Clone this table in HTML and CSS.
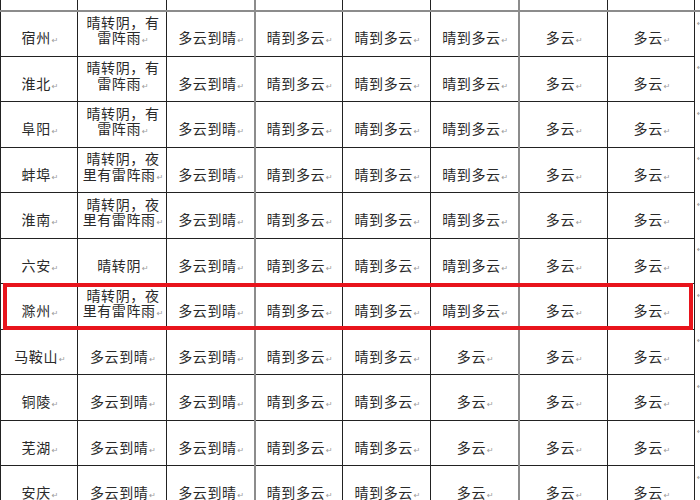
FILE: index.html
```html
<!DOCTYPE html>
<html lang="zh-CN">
<head>
<meta charset="utf-8">
<title>安徽各地天气预报</title>
<link rel="stylesheet" href="styles.css">
</head>
<body>
<div class="sheet">
  <table class="forecast">
    <colgroup>
      <col class="c-city"><col class="c-w1"><col class="c-w2"><col class="c-w3"><col class="c-w4"><col class="c-w5"><col class="c-w6"><col class="c-w7"><col class="c-end">
    </colgroup>
    <tbody>
      <tr class="r-first"><td>亳州<span class="pm">↵</span></td><td>晴转阴，有雷阵雨<span class="pm">↵</span></td><td>多云到晴<span class="pm">↵</span></td><td class="gl">晴到多云<span class="pm">↵</span></td><td>晴到多云<span class="pm">↵</span></td><td>晴到多云<span class="pm">↵</span></td><td class="gl">多云<span class="pm">↵</span></td><td>多云<span class="pm">↵</span></td><td class="end">↵</td></tr>
      <tr class="r-top"><td>宿州<span class="pm">↵</span></td><td>晴转阴，有雷阵雨<span class="pm">↵</span></td><td>多云到晴<span class="pm">↵</span></td><td class="gl">晴到多云<span class="pm">↵</span></td><td>晴到多云<span class="pm">↵</span></td><td>晴到多云<span class="pm">↵</span></td><td class="gl">多云<span class="pm">↵</span></td><td>多云<span class="pm">↵</span></td><td class="end">↵</td></tr>
      <tr><td>淮北<span class="pm">↵</span></td><td>晴转阴，有雷阵雨<span class="pm">↵</span></td><td>多云到晴<span class="pm">↵</span></td><td class="gl">晴到多云<span class="pm">↵</span></td><td>晴到多云<span class="pm">↵</span></td><td>晴到多云<span class="pm">↵</span></td><td class="gl">多云<span class="pm">↵</span></td><td>多云<span class="pm">↵</span></td><td class="end">↵</td></tr>
      <tr><td>阜阳<span class="pm">↵</span></td><td>晴转阴，有雷阵雨<span class="pm">↵</span></td><td>多云到晴<span class="pm">↵</span></td><td class="gl">晴到多云<span class="pm">↵</span></td><td>晴到多云<span class="pm">↵</span></td><td>晴到多云<span class="pm">↵</span></td><td class="gl">多云<span class="pm">↵</span></td><td>多云<span class="pm">↵</span></td><td class="end">↵</td></tr>
      <tr><td>蚌埠<span class="pm">↵</span></td><td>晴转阴，夜里有雷阵雨<span class="pm">↵</span></td><td>多云到晴<span class="pm">↵</span></td><td class="gl">晴到多云<span class="pm">↵</span></td><td>晴到多云<span class="pm">↵</span></td><td>晴到多云<span class="pm">↵</span></td><td class="gl">多云<span class="pm">↵</span></td><td>多云<span class="pm">↵</span></td><td class="end">↵</td></tr>
      <tr><td>淮南<span class="pm">↵</span></td><td>晴转阴，夜里有雷阵雨<span class="pm">↵</span></td><td>多云到晴<span class="pm">↵</span></td><td class="gl">晴到多云<span class="pm">↵</span></td><td>晴到多云<span class="pm">↵</span></td><td>晴到多云<span class="pm">↵</span></td><td class="gl">多云<span class="pm">↵</span></td><td>多云<span class="pm">↵</span></td><td class="end">↵</td></tr>
      <tr><td>六安<span class="pm">↵</span></td><td>晴转阴<span class="pm">↵</span></td><td>多云到晴<span class="pm">↵</span></td><td class="gl">晴到多云<span class="pm">↵</span></td><td>晴到多云<span class="pm">↵</span></td><td>晴到多云<span class="pm">↵</span></td><td class="gl">多云<span class="pm">↵</span></td><td>多云<span class="pm">↵</span></td><td class="end">↵</td></tr>
      <tr><td>滁州<span class="pm">↵</span></td><td>晴转阴，夜里有雷阵雨<span class="pm">↵</span></td><td>多云到晴<span class="pm">↵</span></td><td class="gl">晴到多云<span class="pm">↵</span></td><td>晴到多云<span class="pm">↵</span></td><td>晴到多云<span class="pm">↵</span></td><td class="gl">多云<span class="pm">↵</span></td><td>多云<span class="pm">↵</span></td><td class="end">↵</td></tr>
      <tr><td>马鞍山<span class="pm">↵</span></td><td>多云到晴<span class="pm">↵</span></td><td>多云到晴<span class="pm">↵</span></td><td class="gl">晴到多云<span class="pm">↵</span></td><td>晴到多云<span class="pm">↵</span></td><td>多云<span class="pm">↵</span></td><td class="gl">多云<span class="pm">↵</span></td><td>多云<span class="pm">↵</span></td><td class="end">↵</td></tr>
      <tr><td>铜陵<span class="pm">↵</span></td><td>多云到晴<span class="pm">↵</span></td><td>多云到晴<span class="pm">↵</span></td><td class="gl">晴到多云<span class="pm">↵</span></td><td>晴到多云<span class="pm">↵</span></td><td>多云<span class="pm">↵</span></td><td class="gl">多云<span class="pm">↵</span></td><td>多云<span class="pm">↵</span></td><td class="end">↵</td></tr>
      <tr><td>芜湖<span class="pm">↵</span></td><td>多云到晴<span class="pm">↵</span></td><td>多云到晴<span class="pm">↵</span></td><td class="gl">晴到多云<span class="pm">↵</span></td><td>晴到多云<span class="pm">↵</span></td><td>多云<span class="pm">↵</span></td><td class="gl">多云<span class="pm">↵</span></td><td>多云<span class="pm">↵</span></td><td class="end">↵</td></tr>
      <tr><td>安庆<span class="pm">↵</span></td><td>多云到晴<span class="pm">↵</span></td><td>多云到晴<span class="pm">↵</span></td><td class="gl">晴到多云<span class="pm">↵</span></td><td>晴到多云<span class="pm">↵</span></td><td>多云<span class="pm">↵</span></td><td class="gl">多云<span class="pm">↵</span></td><td>多云<span class="pm">↵</span></td><td class="end">↵</td></tr>
    </tbody>
  </table>
  <div class="highlight"></div>
</div>
</body>
</html>
```

FILE: styles.css
```css
html, body {
  margin: 0;
  padding: 0;
  background: #ffffff;
}

body {
  width: 700px;
  height: 500px;
  overflow: hidden;
  font-family: "Noto Sans CJK SC", "Noto Sans", sans-serif;
  color: #2a2a2a;
}

.sheet {
  position: relative;
  margin-top: -35.5px;
  width: 700px;
}

.forecast {
  border-collapse: collapse;
  table-layout: fixed;
  width: 700px;
}

.c-city { width: 77px; }
.c-w1 { width: 89px; }
.c-w2 { width: 88px; }
.c-w3 { width: 88px; }
.c-w4 { width: 88px; }
.c-w5 { width: 88px; }
.c-w6 { width: 89px; }
.c-w7 { width: 87px; }
.c-end { width: 6px; }

.forecast tr {
  height: 45.5px;
}

.forecast td {
  border: 1px solid #222;
  padding: 0 2px 10px 4px;
  text-align: center;
  vertical-align: bottom;
  font-size: 14px;
  line-height: 15.5px;
  letter-spacing: 0.6px;
  overflow: hidden;
}

.forecast td.gl {
  border-left: 2px solid #8c8c8c;
}

.forecast tr.r-top td {
  border-top: 2px solid #8c8c8c;
}

.forecast td.end {
  border: none;
  padding: 8px 0 0 2px;
  vertical-align: top;
  text-align: left;
  font-family: "DejaVu Sans", sans-serif;
  font-size: 8px;
  line-height: 8px;
  letter-spacing: 0;
  color: #9a9a9a;
}

.pm {
  font-family: "DejaVu Sans", sans-serif;
  font-size: 8px;
  line-height: 8px;
  letter-spacing: 0;
  color: #9a9a9a;
  margin-left: 1px;
}

.highlight {
  position: absolute;
  left: 3px;
  top: 318.5px;
  width: 690px;
  height: 47px;
  box-sizing: border-box;
  border: 4.5px solid #e8141c;
  pointer-events: none;
}
```
